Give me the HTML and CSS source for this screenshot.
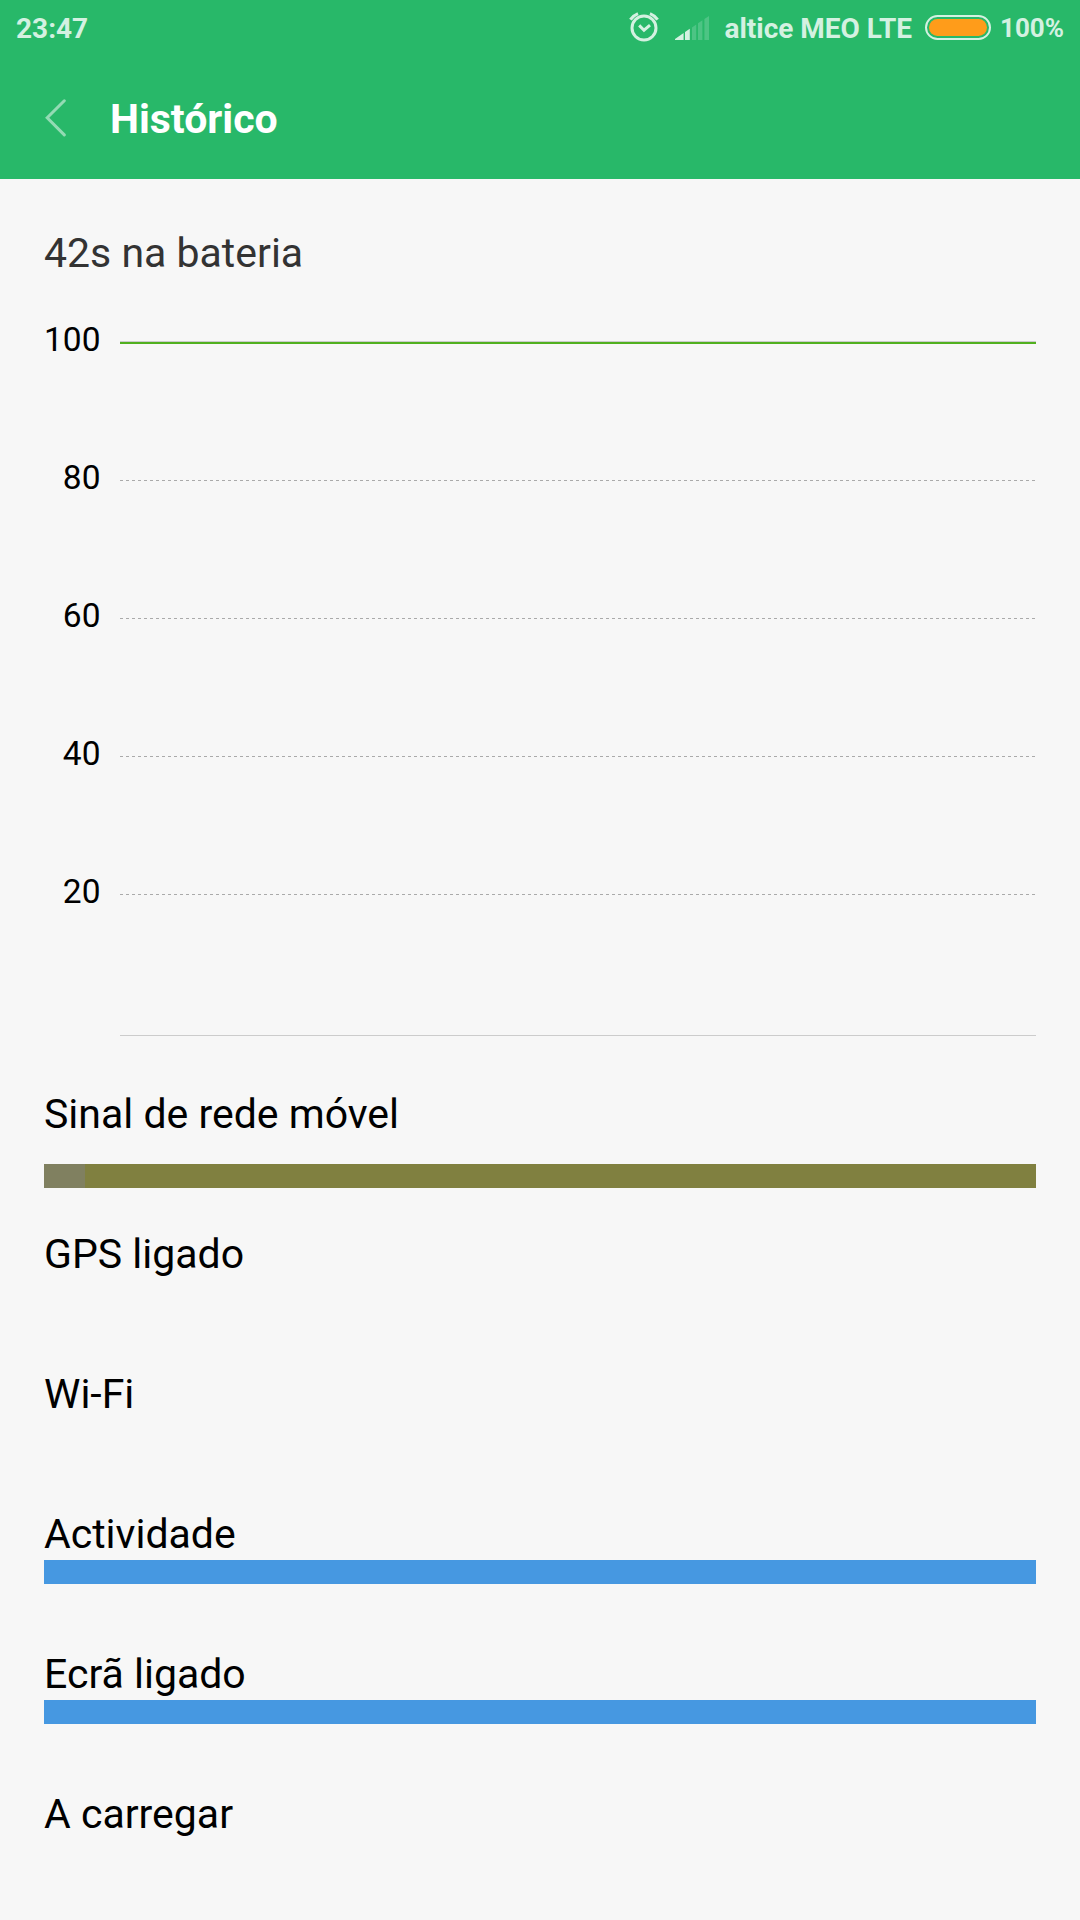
FILE: index.html
```html
<!DOCTYPE html>
<html lang="pt">
<head>
  <meta charset="UTF-8" />
  <meta name="viewport" content="width=device-width, initial-scale=1.0"/>
  <title>Histórico</title>
  <link rel="stylesheet" href="styles.css">
</head>
<body>
  <header class="header">
    <div class="status-bar">
      <span class="time">23:47</span>
      <svg class="alarm" width="32" height="32" viewBox="0 0 32 32">
        <circle cx="16" cy="17" r="12"/>
        <path d="M11.2 14.4l4.8 4.8 6-5M2.4 8.6Q5 4.6 10 2.6M29.6 8.6Q27 4.6 22 2.6"/>
      </svg>
      <svg class="signal" width="34" height="24" viewBox="0 0 34 24">
        <path class="on" d="M0 24v-1l8.6-6V24zM10 24v-8l4.8-3.3V24z"/>
        <path class="off" d="M17 24V11.4l4.2-3V24zM23 24V7.2l4.4-3V24zM29.4 24V3l4.6-3V24z"/>
      </svg>
      <span class="carrier">altice MEO LTE</span>
      <span class="battery"><span class="battery-level"></span></span>
      <span class="percent">100%</span>
    </div>
    <div class="title-bar">
      <svg class="back" width="22" height="38" viewBox="0 0 22 38">
        <path d="M19.3 1.8L2.2 18.8l17.1 17.1"/>
      </svg>
      <h1>Histórico</h1>
    </div>
  </header>

  <main>
    <h2>42s na bateria</h2>

    <div class="chart">
      <div class="chart-row"><span>100</span><div class="line level"></div></div>
      <div class="chart-row"><span>80</span><div class="line dashed"></div></div>
      <div class="chart-row"><span>60</span><div class="line dashed"></div></div>
      <div class="chart-row"><span>40</span><div class="line dashed"></div></div>
      <div class="chart-row"><span>20</span><div class="line dashed"></div></div>
      <div class="chart-row"><span></span><div class="line base"></div></div>
    </div>

    <div class="row signal-row">
      <h3>Sinal de rede móvel</h3>
      <div class="bar bar-signal"><div class="bar-weak"></div></div>
    </div>
    <div class="row"><h3>GPS ligado</h3></div>
    <div class="row"><h3>Wi-Fi</h3></div>
    <div class="row"><h3>Actividade</h3><div class="bar"></div></div>
    <div class="row"><h3>Ecrã ligado</h3><div class="bar"></div></div>
    <div class="row"><h3>A carregar</h3></div>
  </main>
</body>
</html>
```
FILE: styles.css
```css
* {
  box-sizing: border-box;
}
body {
  margin: 0;
  height: 1920px;
  overflow: hidden;
  background-color: #f7f7f7;
  color: #000;
  font-family: Roboto, sans-serif;
}
h1, h2, h3 {
  margin: 0;
  font-size: 41px;
  font-weight: 400;
  line-height: 51px;
}
.header {
  height: 179px;
  background-color: #28b869;
}

/* status bar */
.status-bar {
  display: flex;
  align-items: center;
  height: 56px;
  padding: 0 16px;
  color: #d4f1e1;
  font-size: 28px;
  font-weight: 700;
  white-space: nowrap;
}
.time {
  margin-right: auto;
}
.alarm {
  margin-right: 15px;
  margin-bottom: 2px;
  fill: none;
  stroke: #d4f1e1;
  stroke-width: 3;
}
.signal {
  margin-right: 15px;
}
.signal .on {
  fill: #d4f1e1;
}
.signal .off {
  fill: #4dc484;
}
.battery {
  width: 66px;
  height: 25px;
  margin: 0 9px 1px 13px;
  padding: 2px;
  border: 2px solid #d4f1e1;
  border-radius: 13px;
}
.battery-level {
  display: block;
  height: 17px;
  border-radius: 9px;
  background-color: #ff9c1a;
}
.percent {
  font-size: 26px;
}

/* title bar */
.title-bar {
  display: flex;
  align-items: center;
  height: 123px;
  padding-left: 45px;
}
.title-bar h1 {
  margin-left: 43px;
  padding-top: 3px;
  color: #fff;
  font-weight: 700;
}
.back {
  fill: none;
  stroke: #93dbb4;
  stroke-width: 3;
  stroke-linecap: round;
}

main {
  padding: 49px 44px 0;
}
h2 {
  color: #333;
}

/* battery chart */
.chart {
  padding-top: 40px;
}
.chart-row {
  display: flex;
  justify-content: space-between;
  height: 138px;
  font-size: 33.5px;
  line-height: 42px;
}
.chart-row span {
  width: 56.5px;
  text-align: right;
}
.line {
  width: 916px;
  height: 1px;
  margin-top: 23px;
}
.level {
  height: 3px;
  margin-top: 22px;
  border-top: 1px solid #ccc;
  background-color: #51b01f;
}
.dashed {
  background: repeating-linear-gradient(to right, #aaa 0 3px, transparent 3px 6px);
}
.base {
  margin-top: 26px;
  background-color: #ccc;
}
.chart-row:last-child {
  height: 80px;
}

/* usage rows */
.row {
  height: 140px;
}
.bar {
  height: 24px;
  background-color: #4698e1;
}
.signal-row .bar {
  margin-top: 24px;
}
.bar-signal {
  background-color: #808040;
}
.bar-weak {
  width: 41px;
  height: 24px;
  background-color: #808060;
}
```
